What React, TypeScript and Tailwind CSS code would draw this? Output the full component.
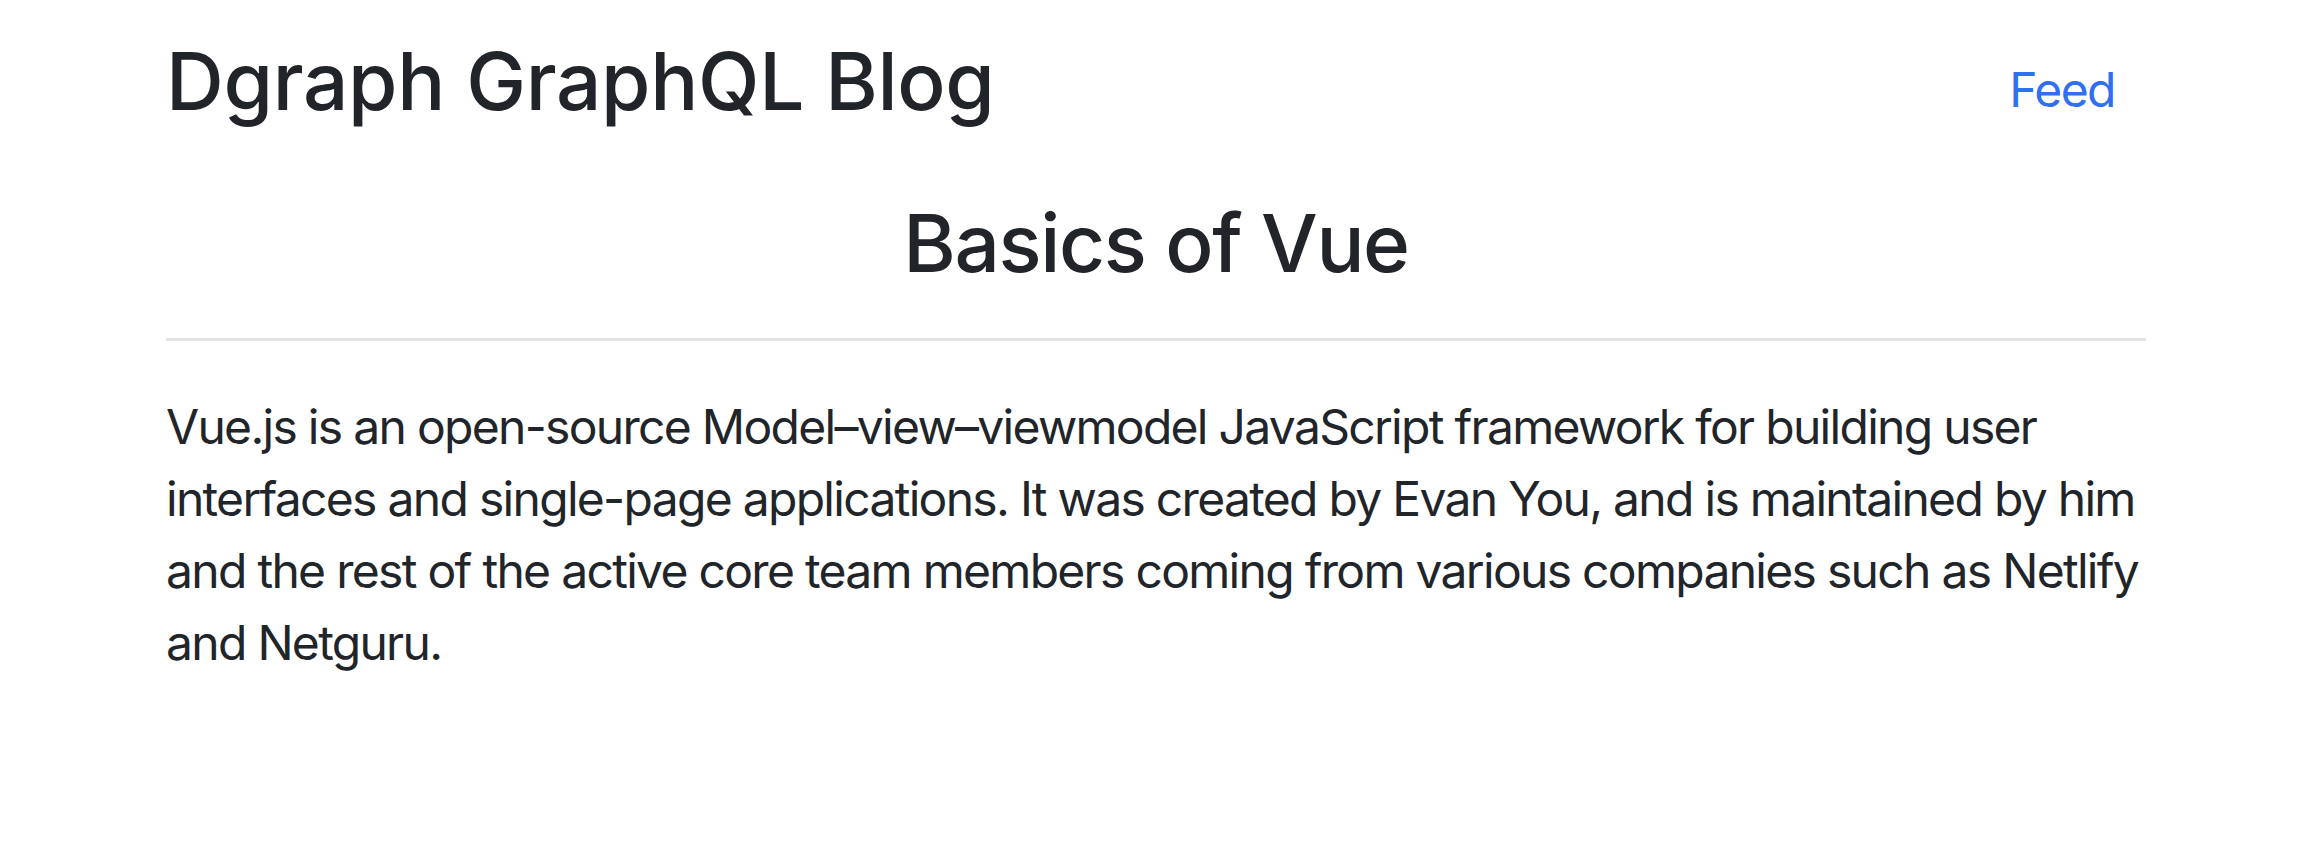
export default function App() {
  return (
    <div className="min-h-[862px] bg-white text-[#212529] font-['Inter',sans-serif]">
      <div className="ml-[166px] w-[1980px]">
        <header className="flex items-start justify-between pt-[33px]">
          <h1 className="text-[80px] leading-[96px] font-medium tracking-[-0.3px]">Dgraph GraphQL Blog</h1>
          <a href="#" className="mt-[21px] pr-[31px] text-[48px] leading-[72px] tracking-[-1.5px] text-[#2f6ff0]">
            Feed
          </a>
        </header>
        <h2 className="mt-[66px] text-center text-[80px] leading-[96px] font-medium tracking-[-1.4px]">Basics of Vue</h2>
        <hr className="mt-[47px] border-0 border-t-[3px] border-[#e4e4e4]" />
        <p className="mt-[50px] text-[48px] leading-[72px] tracking-[-1.7px]">
          Vue.js is an open-source Model–view–viewmodel JavaScript framework for building user
          interfaces and single-page applications. It was created by Evan You, and is maintained by
          him and the rest of the active core team members coming from various companies such as
          Netlify and Netguru.
        </p>
      </div>
    </div>
  );
}
